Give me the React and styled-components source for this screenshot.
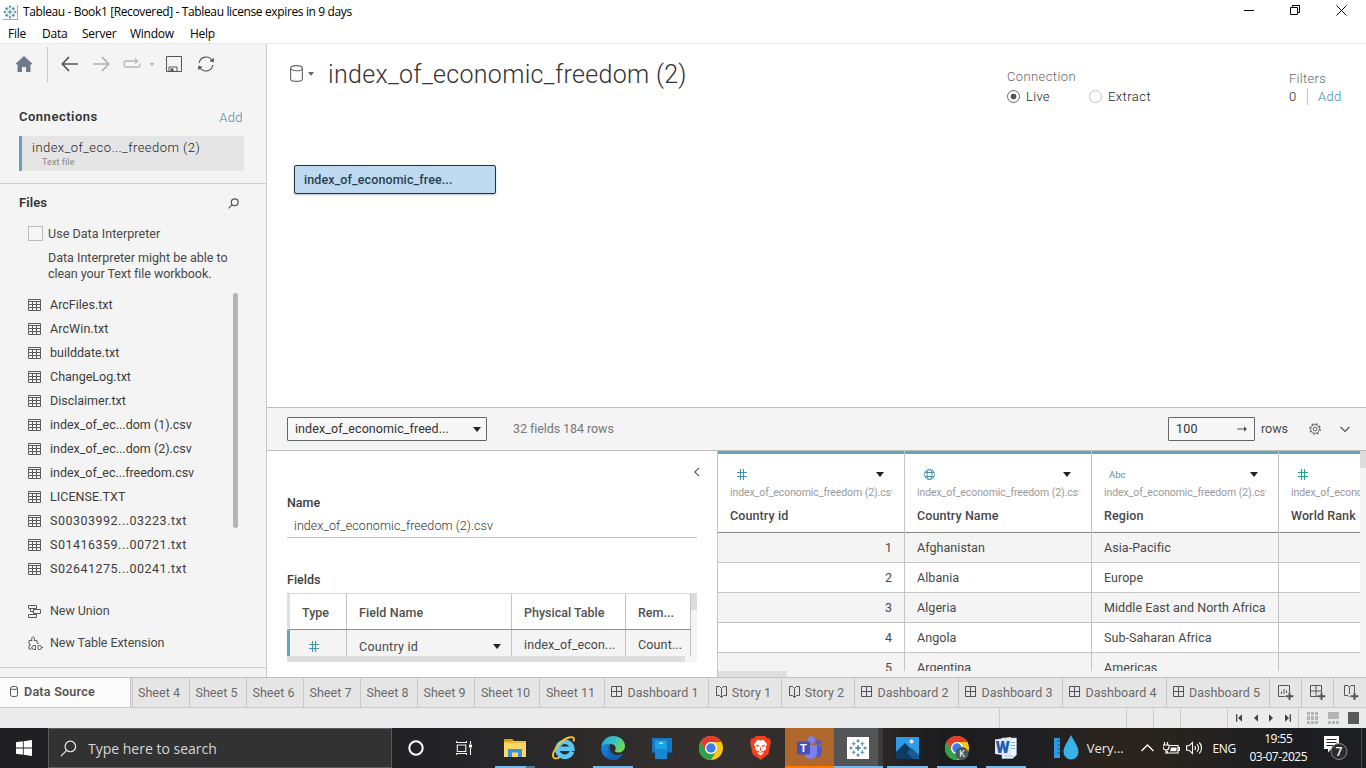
import React from "react";
import styled, { createGlobalStyle, css } from "styled-components";

const Global = createGlobalStyle`
  * { box-sizing: border-box; }
  html, body { margin: 0; padding: 0; overflow: hidden; }
  body { font-family: Roboto, "Liberation Sans", sans-serif; font-size: 13px; color: #333; background: #fff; }
  svg { display: block; flex: none; }
`;

const type = css`
  font-size: ${(p) => p.$size || 13}px;
  font-weight: ${(p) => p.$weight || 400};
  letter-spacing: ${(p) => p.$track || 0}px;
  color: ${(p) => p.$color || "#484848"};
  white-space: pre;
`;

const Window = styled.div`
  width: 1366px;
  height: 768px;
  display: flex;
  flex-direction: column;
  overflow: hidden;
  background: #fff;
`;

/* ---------- window chrome ---------- */
const TitleBar = styled.header`
  height: 24px;
  flex: none;
  display: flex;
  align-items: center;
  padding: 0 2px 0 3px;
  font-family: "Open Sans", sans-serif;
`;
const AppIcon = styled.span`
  width: 15px;
  height: 15px;
  border-right: 1px solid #aaa;
  border-bottom: 1px solid #aaa;
`;
const TitleText = styled.span`
  ${type}
  flex: 1;
  margin: -1px 0 0 5px;
`;
const WindowButton = styled.span`
  width: 46px;
  display: flex;
  justify-content: center;
  margin-top: -4px;
`;
const MenuBar = styled.nav`
  height: 20px;
  flex: none;
  display: flex;
  align-items: center;
  padding-left: 8px;
  border-bottom: 1px solid #eaeaea;
  font-family: "Open Sans", sans-serif;
`;
const MenuItem = styled.span`
  ${type}
  width: ${(p) => p.$width}px;
`;

/* ---------- body ---------- */
const Body = styled.div`
  height: 633px;
  flex: none;
  display: flex;
`;
const Sidebar = styled.aside`
  width: 267px;
  flex: none;
  background: #f4f4f4;
  border-right: 1px solid #c9c9c9;
  display: flex;
  flex-direction: column;
`;
const Toolbar = styled.div`
  height: 56px;
  flex: none;
  display: flex;
  align-items: flex-start;
  padding: 3px 0 0 14px;
`;
const ToolCell = styled.span`
  width: ${(p) => p.$width}px;
  height: 34px;
  display: flex;
  align-items: center;
  justify-content: center;
`;
const ToolDivider = styled.i`
  width: 1px;
  height: 35px;
  margin: 0 6px 0 13px;
  background: #c8c8c8;
`;
const SectionHead = styled.div`
  display: flex;
  align-items: center;
  justify-content: space-between;
  height: 34px;
  padding: 0 ${(p) => p.$right}px 0 19px;
`;
const Label = styled.span`
  ${type}
`;
const RaisedLabel = styled(Label)`
  padding-bottom: 2px;
`;
const ConnectionItem = styled.div`
  margin: 2px 22px 12px 19px;
  height: 35px;
  flex: none;
  border-left: 3px solid #66a3bd;
  background: #e5e5e5;
  padding: 4px 0 0 10px;
  display: flex;
  flex-direction: column;
`;
const ConnName = styled.span`
  ${type}
  line-height: 16px;
`;
const ConnKind = styled.span`
  ${type}
  line-height: 13px;
  margin-left: 10px;
`;
const FilesSection = styled.section`
  flex: 1;
  border-top: 1px solid #cfcfcf;
  border-bottom: 1px solid #cfcfcf;
  padding-top: 2px;
`;
const Interpreter = styled.div`
  display: flex;
  padding: 6px 0 0 28px;
  height: 73px;
`;
const CheckBox = styled.i`
  width: 15px;
  height: 15px;
  border: 1px solid #bcbcbc;
  background: #f6f6f6;
  margin: 0 5px 0 0;
`;
const InterpreterText = styled.div`
  display: flex;
  flex-direction: column;
`;
const Line = styled.span`
  ${type}
  line-height: 16px;
  margin-bottom: ${(p) => p.$gap || 0}px;
`;
const FileArea = styled.div`
  display: flex;
  justify-content: space-between;
  padding: 0 28px 0 28px;
  height: 288px;
`;
const FileList = styled.div`
  display: flex;
  flex-direction: column;
`;
const FileRow = styled.div`
  height: ${(p) => p.$height || 24}px;
  display: flex;
  align-items: center;
  gap: ${(p) => p.$gap || 9}px;
`;
const ScrollThumb = styled.i`
  width: 5px;
  height: 235px;
  border-radius: 3px;
  background: #b4b4b4;
`;
const Extras = styled.div`
  padding: 14px 0 0 28px;
`;
const SidebarFoot = styled.div`
  height: 9px;
  flex: none;
`;

/* ---------- canvas ---------- */
const Main = styled.main`
  width: 1099px;
  display: flex;
  flex-direction: column;
`;
const Canvas = styled.section`
  height: 363px;
  flex: none;
`;
const CanvasHead = styled.div`
  display: flex;
  height: 121px;
  padding-left: 23px;
`;
const SourcePicker = styled.span`
  display: flex;
  align-items: center;
  height: 59px;
  gap: 5px;
  width: 38px;
`;
const SourceTitle = styled.h1`
  ${type}
  margin: 0;
  line-height: 62px;
  width: 679px;
`;
const ConnectionMode = styled.div`
  width: 282px;
  padding-top: 25px;
`;
const Radios = styled.div`
  display: flex;
  align-items: center;
  height: 22px;
  margin-top: 1px;
`;
const Radio = styled.i`
  width: 13px;
  height: 13px;
  border-radius: 50%;
  border: 1px solid ${(p) => (p.$on ? "#666" : "#c4c4c4")};
  background: ${(p) => (p.$on ? "radial-gradient(circle, #555 0 2.6px, #fff 3.2px)" : "#fff")};
  margin-right: 6px;
`;
const RadioOption = styled.label`
  display: flex;
  align-items: center;
  width: 82px;
`;
const Filters = styled.div`
  padding-top: 27px;
`;
const FilterRow = styled.div`
  display: flex;
  align-items: center;
  height: 20px;
`;
const FilterDivider = styled.i`
  width: 1px;
  height: 17px;
  margin: 0 10px 0 10px;
  background: #c8c8c8;
`;
const TablePill = styled.div`
  margin-left: 27px;
  width: 202px;
  height: 29px;
  border: 1px solid #2a3138;
  border-radius: 2px;
  background: #bddaf1;
  box-shadow: 0 1px 2px rgba(0, 0, 0, 0.25);
  display: flex;
  align-items: center;
  padding-left: 9px;
`;

/* ---------- data pane ---------- */
const PaneBar = styled.div`
  height: 44px;
  flex: none;
  background: #f4f4f4;
  border-top: 1px solid #bdbdbd;
  border-bottom: 1px solid #bdbdbd;
  display: flex;
  align-items: center;
  padding: 0 16px 0 20px;
`;
const Select = styled.div`
  width: ${(p) => p.$width}px;
  height: 24px;
  border: 1px solid #666;
  border-radius: 1px;
  background: #f7f7f7;
  display: flex;
  align-items: center;
  justify-content: space-between;
  padding: 0 ${(p) => p.$right || 5}px 0 7px;
`;
const BarText = styled.span`
  ${type}
  margin-left: ${(p) => p.$left}px;
  padding-bottom: 2px;
`;
const Spacer = styled.span`
  flex: 1;
`;
const IconSlot = styled.span`
  margin-left: ${(p) => p.$left}px;
`;
const Caret = styled.i`
  width: 0;
  height: 0;
  flex: none;
  border: ${(p) => p.$size || 4}px solid transparent;
  border-top: ${(p) => (p.$size || 4) + 1}px solid ${(p) => p.$color || "#222"};
  border-bottom: 0;
`;
const Pane = styled.div`
  flex: 1;
  min-height: 0;
  display: flex;
`;
const Details = styled.section`
  width: 451px;
  flex: none;
  border-right: 1px solid #c4c4c4;
  padding: 0 20px;
`;
const CollapseRow = styled.div`
  height: 42px;
  display: flex;
  justify-content: flex-end;
  align-items: center;
  margin-right: -5px;
`;
const DetailLabel = styled.div`
  ${type}
  line-height: 20px;
`;
const NameField = styled.div`
  ${type}
  height: 25px;
  line-height: 25px;
  padding-left: 7px;
  border-bottom: 1px solid #c4c4c4;
  margin-bottom: 32px;
`;
const FieldsTable = styled.div`
  margin-top: 3px;
  height: 63px;
  display: flex;
`;
const FieldsGrid = styled.div`
  width: 404px;
  border-top: 1px solid #d4d4d4;
`;
const FieldsRow = styled.div`
  height: ${(p) => (p.$head ? 36 : 26)}px;
  display: grid;
  grid-template-columns: 57px 165px 114px 65px;
  border-left: 3px solid ${(p) => (p.$head ? "#dedede" : "#66a3bd")};
  border-bottom: ${(p) => (p.$head ? "1px solid #8c8c8c" : "0")};
  background: ${(p) => (p.$head ? "#fff" : "#f4f4f4")};
`;
const FieldsCell = styled.div`
  display: flex;
  align-items: center;
  justify-content: ${(p) => (p.$between ? "space-between" : "flex-start")};
  padding: ${(p) => p.$top || 0}px 10px 0 12px;
  border-right: 1px solid #c4c4c4;
  overflow: hidden;
`;
const VTrack = styled.div`
  width: 6px;
  flex: none;
  background: #f4f4f4;
`;
const VThumb = styled.div`
  height: ${(p) => p.$height}px;
  background: #dcdcdc;
`;
const HTrack = styled.div`
  height: 6px;
  flex: none;
  background: #f4f4f4;
`;
const HThumb = styled.div`
  height: 6px;
  width: ${(p) => p.$width}px;
  background: #dedede;
`;

const GridArea = styled.section`
  flex: 1;
  min-width: 0;
  display: flex;
`;
const GridMain = styled.div`
  width: 642px;
  display: flex;
  flex-direction: column;
  overflow: hidden;
`;
const GridColumns = styled.div`
  display: flex;
  height: 220px;
  flex: none;
  overflow: hidden;
`;
const GridColumn = styled.div`
  width: 187px;
  flex: none;
  border-right: 1px solid #c4c4c4;
`;
const ColumnHead = styled.div`
  height: 82px;
  border-top: 3px solid #66a3bd;
  border-bottom: 1px solid #858985;
  padding: 0 12px;
  overflow: hidden;
`;
const ColumnTop = styled.div`
  height: 31px;
  display: flex;
  align-items: center;
  justify-content: space-between;
  padding: 9px 8px 0 ${(p) => p.$left || 7}px;
`;
const ColumnSource = styled.div`
  ${type}
  line-height: 16px;
  overflow: hidden;
`;
const ColumnName = styled.div`
  ${type}
  line-height: 30px;
`;
const GridCell = styled.div`
  ${type}
  height: 30px;
  line-height: 30px;
  padding: 0 12px;
  text-align: ${(p) => (p.$right ? "right" : "left")};
  background: ${(p) => (p.$odd ? "#f4f4f4" : "#fff")};
  border-bottom: 1px solid #c4c4c4;
`;

/* ---------- sheet tabs and status ---------- */
const Tabs = styled.nav`
  height: 31px;
  flex: none;
  display: flex;
  background: #e6e6e6;
  border-top: 1px solid #c2c2c2;
  border-bottom: 1px solid #c9c9c9;
`;
const Tab = styled.span`
  ${type}
  width: ${(p) => p.$width}px;
  flex: none;
  display: flex;
  align-items: center;
  justify-content: center;
  gap: 4px;
  padding-right: 3px;
  border-right: 1px solid #c9c9c9;
`;
const AddTab = styled(Tab)`
  padding: 1px 0 0 1px;
`;
const ActiveTab = styled.span`
  ${type}
  width: 131px;
  flex: none;
  display: flex;
  align-items: center;
  gap: 6px;
  padding: 0 0 2px 10px;
  background: #fbfbfb;
  border-right: 1px solid #c2c2c2;
  margin-right: 1px;
  box-shadow: 1px 0 0 #e6e6e6, 2px 0 0 #c9c9c9;
`;
const Status = styled.div`
  height: 20px;
  flex: none;
  background: #ebebeb;
  display: flex;
  justify-content: flex-end;
`;
const StatusCell = styled.span`
  width: ${(p) => p.$width}px;
  border-left: 1px solid #cccccc;
  display: flex;
  align-items: center;
  justify-content: space-between;
  padding: 0 ${(p) => p.$pad || 0}px 0 ${(p) => (p.$pad ? p.$pad + 1 : 0)}px;
`;

/* ---------- taskbar ---------- */
const Taskbar = styled.footer`
  height: 40px;
  flex: none;
  display: flex;
  background: linear-gradient(90deg, #1f1f22 0%, #222226 30%, #2c2a29 42%, #353130 54%, #2c2825 64%, #1c1c1e 69%, #202023 76%, #2b241c 81%, #262320 87%, #1c1d21 95%, #1e1f22 100%);
`;
const StartButton = styled.span`
  width: 48px;
  flex: none;
  display: flex;
  align-items: center;
  justify-content: center;
`;
const SearchBox = styled.div`
  width: 344px;
  flex: none;
  border: 1px solid #5a5a5a;
  background: #323232;
  display: flex;
  align-items: center;
  padding-left: 11px;
  gap: 11px;
  font-family: "Open Sans", sans-serif;
`;
const TaskItem = styled.span`
  position: relative;
  width: 49.1px;
  flex: none;
  display: flex;
  align-items: center;
  justify-content: center;
  background: ${(p) => p.$bg || "transparent"};
  &::after {
    content: "";
    position: absolute;
    bottom: 0;
    left: ${(p) => p.$inset ?? 4.5}px;
    right: ${(p) => p.$inset ?? 4.5}px;
    height: 2px;
    background: ${(p) => p.$line || "transparent"};
  }
`;
const Tray = styled.div`
  flex: 1;
  min-width: 0;
  display: flex;
  align-items: center;
  padding-left: 24px;
  font-family: "Open Sans", sans-serif;
`;
const TraySlot = styled.span`
  width: ${(p) => p.$width}px;
  flex: none;
  display: flex;
  align-items: center;
  justify-content: center;
`;
const Clock = styled.span`
  ${type}
  width: 80px;
  flex: none;
  text-align: center;
  line-height: 18px;
`;
const PeekLine = styled.i`
  width: 1px;
  height: 40px;
  background: #4a4a4d;
  margin-left: 7px;
`;

/* ---------- icons ---------- */
const TableauMark = ({ size = 14, c = "#3c7d96" }) => (
  <svg width={size} height={size} viewBox="0 0 28 28" fill="none" stroke={c} strokeWidth="1.8">
    <path d="M14 9v10M9 14h10" strokeWidth="2" />
    <path d="M7.5 4v7M4 7.5h7M20.500 4v7M17 7.500h7M7.500 17v7M4 20.500h7M20.500 17v7M17 20.500h7" />
    <path d="M14 1v5M11.500 3.500h5M14 22v5M11.500 24.500h5M1 14h5M3.500 11.500v5M22 14h5M24.500 11.500v5" />
  </svg>
);
const HomeIcon = () => (
  <svg width="18" height="16" viewBox="0 0 18 16" fill="#6d7b8b">
    <path d="M9 0 18 8.300h-2.500V16H11v-5H7v5H2.500V8.300H0z" />
  </svg>
);
const ArrowIcon = ({ c, flip }) => (
  <svg width="17" height="16" viewBox="0 0 17 16" fill="none" stroke={c} strokeWidth="1.700" transform={flip ? "scale(-1,1)" : undefined}>
    <path d="M8 1 1.300 8 8 15M1.500 8H17" />
  </svg>
);
const LoopIcon = () => (
  <svg width="18" height="12" viewBox="0 0 18 12" fill="none" stroke="#b5b5b5" strokeWidth="1.300">
    <path d="M13 3H3.500A2.500 2.500 0 0 0 1 5.500v1A2.500 2.500 0 0 0 3.500 9h11A2.500 2.500 0 0 0 17 6.500V5.500M12 .5 14.500 3 12 5.500" />
  </svg>
);
const SaveIcon = () => (
  <svg width="16" height="16" viewBox="0 0 16 16" fill="none" stroke="#555" strokeWidth="1">
    <path d="M.5.5h15v15H.5zM3 15.500V11h8v4.500" />
    <path d="M4.500 12.500h3v3h-3z" fill="#555" stroke="none" />
  </svg>
);
const RefreshIcon = () => (
  <svg width="18" height="16" viewBox="0 0 18 16" fill="none" stroke="#555" strokeWidth="1.200">
    <path d="M2.200 7A6.900 6.900 0 0 1 15 4.500M15.800 9A6.900 6.900 0 0 1 3 11.500" />
    <path d="M16.800 1.800v4.400l-4.300-1zM1.200 14.200V9.800l4.300 1z" fill="#555" stroke="none" />
  </svg>
);
const SearchIcon = ({ size = 11, c = "#555", w = 1.200 }) => (
  <svg width={size} height={size} viewBox="0 0 11 11" fill="none" stroke={c} strokeWidth={w}>
    <circle cx="6.700" cy="4.200" r="3.400" />
    <path d="M4.300 6.700.6 10.400" />
  </svg>
);
const TableIcon = () => (
  <svg width="13" height="13" viewBox="0 0 13 13" fill="none" stroke="#5c5c5c">
    <path d="M.5.5h12v11H.5zM.5 2.500h12M.5 5.500h12M.5 8.500h12M4.500 2.500v9M8.500 2.500v9" />
  </svg>
);
const UnionIcon = () => (
  <svg width="13" height="13" viewBox="0 0 13 13" fill="none" stroke="#5c5c5c">
    <path d="M.5.5h8v3h-8zM5.500 4.500h7v4h-7zM.5 9.500h8v3h-8zM2.500 3.500v3H5" />
  </svg>
);
const ExtensionIcon = () => (
  <svg width="15" height="14" viewBox="0 0 15 14" fill="none" stroke="#5c5c5c" strokeWidth="1">
    <path d="M3.500 13H1V9.500c2 .6 2-2 0-1.500V4.500h3c-1-2.500.5-4 1.500-3.500s1.500 1.500.7 3.500H9V7l2 .5" />
    <path d="M7.500 9.500H6a2 2 0 0 0 0 4h1.500zM10 9.500h1.500a2 2 0 0 1 0 4H10zM3.500 11.500H4M13.500 11.500H15" />
  </svg>
);
const CylinderIcon = () => (
  <svg width="13" height="17" viewBox="0 0 13 17" fill="none" stroke="#666" strokeWidth="1.100">
    <path d="M.6 3.200v10.500c0 1.500 2.300 2.700 5.900 2.700s5.900-1.200 5.900-2.700V3.200" />
    <ellipse cx="6.500" cy="3.200" rx="5.900" ry="2.600" />
  </svg>
);
const TabCylinderIcon = () => (
  <svg width="8" height="11" viewBox="0 0 8 11" fill="none" stroke="#555">
    <rect x=".5" y=".5" width="7" height="10" rx="2" />
    <path d="M.5 2.500c1 1.300 6 1.300 7 0" />
  </svg>
);
const HashIcon = ({ c = "#4a93b0" }) => (
  <svg width="10" height="11" viewBox="0 0 10 11" fill="none" stroke={c} strokeWidth="1.150">
    <path d="M3.500 0v11M6.500 0v11M0 3.500h10M0 7.500h10" />
  </svg>
);
const GlobeIcon = () => (
  <svg width="11" height="11" viewBox="0 0 11 11" fill="none" stroke="#4a93b0" strokeWidth="1">
    <circle cx="5.500" cy="5.500" r="5" />
    <ellipse cx="5.500" cy="5.500" rx="2.400" ry="5" />
    <path d="M1 3.500h9M1 7.500h9" />
  </svg>
);
const Chevron = ({ d, w = 10, h = 10, c = "#555", s = 1.200 }) => (
  <svg width={w} height={h} viewBox="0 0 10 10" fill="none" stroke={c} strokeWidth={s}>
    <path d={d} />
  </svg>
);
const GoArrow = () => (
  <svg width="10" height="6" viewBox="0 0 10 6" fill="#555">
    <path d="M0 2.500h7V.3L10 3 7 5.700V3.500H0z" />
  </svg>
);
const GearIcon = () => (
  <svg width="12" height="12" viewBox="0 0 12 12" fill="none" stroke="#666">
    <circle cx="6" cy="6" r="5.200" strokeDasharray="2 2.080" strokeWidth="1.300" />
    <circle cx="6" cy="6" r="4.300" strokeWidth=".9" />
    <circle cx="6" cy="6" r="1.900" strokeWidth="1" />
  </svg>
);
const DashIcon = () => (
  <svg width="12" height="13" viewBox="0 0 12 13" fill="none" stroke="#555">
    <path d="M.5.5h10v10H.5zM5.500.5v10M.5 5.500h10" />
  </svg>
);
const StoryIcon = () => (
  <svg width="12" height="14" viewBox="0 0 12 14" fill="none" stroke="#555">
    <path d="M5.500 2.500 3.500.5h-3v9h3l2 2 2-2h3v-9h-3zM5.500 2.500v9" />
  </svg>
);
const AddBadge = () => <path d="M11.500 7.500V15M7.700 11.300h7.600" strokeWidth="1.900" />;
const NewSheetIcon = () => (
  <svg width="16" height="16" viewBox="0 0 16 16" fill="none" stroke="#555">
    <path d="M7 11.500H.5V.5h11V7M3.500 9V6.500M6 9V4M8.500 8V5.500" />
    <AddBadge />
  </svg>
);
const NewDashIcon = () => (
  <svg width="16" height="16" viewBox="0 0 16 16" fill="none" stroke="#555">
    <path d="M7.500 11.500h-7V.5h11V7M6 .5v11M.5 6h11" />
    <AddBadge />
  </svg>
);
const NewStoryIcon = () => (
  <svg width="16" height="16" viewBox="0 0 16 16" fill="none" stroke="#555">
    <path d="M6.500 12 5 10.500H1.500V.5H5l1.500 2 1.500-2h3.500V7M6.500 2.500V9" />
    <AddBadge />
  </svg>
);
const NavIcon = ({ flip, bar }) => (
  <svg width="7" height="8" viewBox="0 0 7 8" fill="#444" transform={flip ? "scale(-1,1)" : undefined}>
    <path d="M6 .3v7.400L2 4z" />
    {bar && <path d="M0 .3h1.300v7.400H0z" />}
  </svg>
);
const TilesIcon = () => (
  <svg width="11" height="12" viewBox="0 0 11 12" fill="#b4b4b4">
    <path d="M0 0h3v3H0zM4 0h3v3H4zM8 0h3v3H8zM0 4h3v4H0zM4 4h3v4H4zM8 4h3v4H8zM0 9h3v3H0zM4 9h3v3H4zM8 9h3v3H8z" />
  </svg>
);
const StripIcon = () => (
  <svg width="11" height="12" viewBox="0 0 11 12" fill="#b4b4b4">
    <path d="M0 0h11v7H0zM0 9h3v3H0zM4 9h3v3H4zM8 9h3v3H8z" />
  </svg>
);
const SolidIcon = () => (
  <svg width="11" height="12" viewBox="0 0 11 12" fill="#5a5a5a"><path d="M0 0h11v12H0z" /></svg>
);

const WindowsIcon = () => (
  <svg width="16" height="16" viewBox="0 0 16 16" fill="#fff">
    <path d="M0 2.200 6.900 1.300v6.300H0zM7.700 1.200 16 0v7.600H7.700zM0 8.400h6.900v6.300L0 13.800zM7.700 8.400H16V16l-8.300-1.200z" />
  </svg>
);
const CortanaIcon = () => (
  <svg width="17" height="16" viewBox="0 0 17 16" fill="none" stroke="#fff" strokeWidth="2"><circle cx="8" cy="8" r="6.700" /></svg>
);
const TaskViewIcon = () => (
  <svg width="20" height="16" viewBox="0 0 20 16" fill="none" stroke="#f2f2f2" strokeWidth="1.100">
    <path d="M1.300 5h8.500v6.500H1.300zM.5 1v1.500h10V1M.5 15v-1.500h10V15M14.500 1v3M14.500 8v7" />
    <path d="M13 4.500h3v3h-3z" fill="#fff" stroke="none" />
  </svg>
);
const FolderIcon = () => (
  <svg width="22" height="20" viewBox="0 0 22 20">
    <path d="M0 1h8l2 2h12v16H0z" fill="#f3bd3b" />
    <path d="M0 1h8l1.500 2.500H0z" fill="#d99a1c" />
    <path d="M0 5h22v14H0z" fill="#ffd768" />
    <path d="M4 19v-8h14v8h-4v-4.500H8V19z" fill="#3a93d6" />
  </svg>
);
const IEIcon = () => (
  <svg width="24" height="24" viewBox="0 0 24 24" fill="none">
    <path d="M20 15.500A7.500 7.500 0 1 1 20.300 12.800H7" stroke="#58c8f3" strokeWidth="4.500" />
    <path d="M2 22C-2 18 8 4 17 1.500c5-1.400 5.500 1 4.500 4" stroke="#f2c230" strokeWidth="1.900" />
    <path d="M2 22c1.500 1 4 .2 6-1" stroke="#f2c230" strokeWidth="1.900" />
  </svg>
);
const EdgeIcon = () => (
  <svg width="24" height="24" viewBox="0 0 24 24">
    <defs>
      <linearGradient id="edgeTop" x1="0" y1="0" x2="1" y2=".5"><stop stopColor="#2aa3e0" /><stop offset=".55" stopColor="#35c2c4" /><stop offset="1" stopColor="#6fdc55" /></linearGradient>
      <linearGradient id="edgeLow" x1="0" y1="0" x2="1" y2="1"><stop stopColor="#1b8de0" /><stop offset="1" stopColor="#0c4f9e" /></linearGradient>
    </defs>
    <path d="M.3 11C1 4.500 6 0 12.300 0 19 0 24 4.500 24 10c0 4-3 6.500-6.500 6.500-3 0-4-1.200-3.500-2 2-3 0-6.500-4.500-6.500C5 8 1.500 9.500.3 11z" fill="url(#edgeTop)" />
    <path d="M.2 12C1.500 8.500 6 7 9.500 8 7 10 7 16 12 18.500c3.500 1.700 7 1 9.800-.8C19.500 22 16 24 12 24 5 24-.3 18.500.2 12z" fill="url(#edgeLow)" />
    <path d="M8.500 9.500C5.500 14 8 22 14.500 23.700 18 22.800 20.500 20.500 21.800 17.700 18.500 19.500 14.500 19.500 12 17.500 9 15 9 12 8.500 9.500z" fill="#1362b0" />
  </svg>
);
const PhoneIcon = () => (
  <svg width="22" height="22" viewBox="0 0 22 22">
    <path d="M1 1h20v15H1z" fill="#1976c0" />
    <path d="M0 15h22v1.500H0z" fill="#0c4f91" />
    <path d="M4 3.500h12V22H4z" fill="#1ba3e8" />
    <path d="M4 12h12v10H4z" fill="#1689d2" />
    <path d="M8 5.500h4v1.300H8z" fill="#d8f2ff" />
  </svg>
);
const ChromeIcon = ({ badge }) => (
  <svg width="24" height="24" viewBox="0 0 24 24">
    <circle cx="12" cy="12" r="12" fill="#fbc515" />
    <path d="M1.600 6A12 12 0 0 0 12 24l5.200-9A6 6 0 0 1 6.800 15z" fill="#2da14c" />
    <path d="M1.600 6A12 12 0 0 1 22.400 6H12a6 6 0 0 0-5.200 9z" fill="#e33b2e" />
    <circle cx="12" cy="12" r="6" fill="#fff" />
    <circle cx="12" cy="12" r="4.700" fill="#3b7ded" />
    {badge && (
      <g>
        <circle cx="17" cy="17.500" r="6.500" fill="#455a64" />
        <text x="17" y="20.800" textAnchor="middle" fontSize="9" fontFamily="Roboto" fill="#fff">K</text>
      </g>
    )}
  </svg>
);
const BraveIcon = () => (
  <svg width="21" height="24" viewBox="0 0 21 24">
    <path d="M6 0h9l2.500 2.500 2-.3L21 6l-.7 2.500L18.500 18 10.500 24 2.500 18 .7 8.500 0 6l1.500-3.800 2 .3z" fill="#f5401f" />
    <path d="m10.500 4.500 3-.7 3.500 4.500-1.500 3 .5 2-3 2.200.5 1.700-3 2.300-3-2.300.5-1.700L5 13.300l.5-2-1.500-3 3.500-4.500z" fill="#fff" />
    <path d="m6 8.500 3 1-.5 1.500-2-.7zM15 8.500l-3 1 .5 1.500 2-.7zM10.500 10l.7 4-.7 1-.7-1zM7.500 14l2.500 2h1l2.500-2-1 2.500h-4z" fill="#f5401f" />
  </svg>
);
const TeamsIcon = () => (
  <svg width="25" height="24" viewBox="0 0 25 24">
    <circle cx="21.500" cy="6.500" r="2.600" fill="#5059c9" />
    <circle cx="14.500" cy="4" r="3.700" fill="#7b83eb" />
    <path d="M18 10h7v7a4 4 0 0 1-6 3.300z" fill="#5059c9" />
    <path d="M8 9h12v8a6.500 6.500 0 0 1-12 3z" fill="#7b83eb" />
    <rect y="5.500" width="13" height="13" rx="1.200" fill="#4650b8" />
    <text x="6.500" y="16" textAnchor="middle" fontSize="11" fontWeight="700" fontFamily="Roboto" fill="#fff">T</text>
  </svg>
);
const TableauTile = () => (
  <svg width="22" height="22" viewBox="0 0 28 28" fill="none">
    <path d="M0 0h28v28H0z" fill="#fff" />
    <g strokeWidth="1.300">
      <path d="M14 10.500v7M10.500 14h7" stroke="#3a7fa0" strokeWidth="2" />
      <path d="M8.500 6v5M6 8.500h5M19.500 6v5M17 8.500h5M8.500 17v5M6 19.500h5M19.500 17v5M17 19.500h5" stroke="#4f93b0" />
      <path d="M14 3v4M12 5h4M14 21v4M12 23h4M3 14h4M5 12v4M21 14h4M23 12v4" stroke="#3f718c" />
    </g>
  </svg>
);
const PhotosIcon = () => (
  <svg width="23" height="22" viewBox="0 0 23 22">
    <path d="M0 0h23v22H0z" fill="#2e9be8" />
    <path d="M0 15 9 6l14 14v2H0z" fill="#0f3b63" />
    <path d="M11 15.500 15.500 11l7.500 7v4h-6z" fill="#1b5a92" />
    <circle cx="15.500" cy="4.500" r="2" fill="#e6f5ff" />
  </svg>
);
const WordIcon = () => (
  <svg width="22" height="22" viewBox="0 0 22 22">
    <path d="M7 1h14.500v17l-4 3.500H7z" fill="#f4f8fc" stroke="#9fb9d6" strokeWidth=".6" />
    <path d="M15 5.500h5M15.500 8.500H20M15.500 11.500H20M9 19h9" stroke="#86a9d1" strokeWidth="1" />
    <path d="M0 2.500 16 0v19L0 17z" fill="#dce9f6" />
    <text x="7.800" y="15.500" textAnchor="middle" fontSize="16" fontWeight="900" fontFamily="Roboto" fill="#1f5aa6">W</text>
  </svg>
);
const WeatherIcon = () => (
  <svg width="25" height="26" viewBox="0 0 25 26">
    <path d="M0 3h6v20H0z" fill="#2c9be6" />
    <path d="M3.500 6H6M3.500 10H6M3.500 14H6M3.500 18H6" stroke="#174a75" />
    <path d="M17 0c3 6.500 7.500 11 7.500 17a7.500 7.500 0 0 1-15 0C9.500 11 14 6.500 17 0z" fill="#38b3ea" />
  </svg>
);
const BatteryIcon = () => (
  <svg width="17" height="13" viewBox="0 0 17 13" fill="none" stroke="#fff" strokeWidth="1.200">
    <path d="M7 3.500h8v7.500H4.500V9M15 5.500h1.500v3H15" />
    <path d="M8 5.500h5.500v3.800H7z" fill="#fff" stroke="none" />
    <path d="M1.500 0v3M4.500 0v3M0 3h6v2a3 3 0 0 1-6 0zM3 8v4" />
  </svg>
);
const SoundIcon = () => (
  <svg width="17" height="14" viewBox="0 0 17 14" fill="none" stroke="#fff" strokeWidth="1.100">
    <path d="M.6 4.800H3L6.500 1.500v11L3 9.200H.6zM8.700 5a3 3 0 0 1 0 4M11 3.200a5.500 5.500 0 0 1 0 7.600M13.300 1.500a8 8 0 0 1 0 11" />
  </svg>
);
const NoticeIcon = () => (
  <svg width="26" height="26" viewBox="0 0 26 26">
    <path d="M1 1h15v13H8l-3 3.500V14H1z" fill="#fff" />
    <path d="M3.500 4.500h10M3.500 7.500h10M3.500 10.500h7" stroke="#222" strokeWidth="1.100" />
    <circle cx="16" cy="16.500" r="8" fill="#2b2c2f" stroke="#8b8b8b" />
    <text x="16" y="20.800" textAnchor="middle" fontSize="12" fontWeight="600" fontFamily="Open Sans" fill="#fff">7</text>
  </svg>
);

/* ---------- data ---------- */
const files = [
  ["ArcFiles.txt", 0], ["ArcWin.txt", 0.1], ["builddate.txt", 0], ["ChangeLog.txt", 0], ["Disclaimer.txt", 0],
  ["index_of_ec...dom (1).csv", 0], ["index_of_ec...dom (2).csv", 0], ["index_of_ec...freedom.csv", -0.03],
  ["LICENSE.TXT", 0.05], ["S00303992...03223.txt", 0.5], ["S01416359...00721.txt", 0.5], ["S02641275...00241.txt", 0.5],
];
const columns = [
  { name: "Country id", icon: <HashIcon />, right: true, rows: ["1", "2", "3", "4", "5"] },
  { name: "Country Name", icon: <GlobeIcon />, rows: ["Afghanistan", "Albania", "Algeria", "Angola", "Argentina"] },
  { name: "Region", left: 5, icon: <Label $size={9.5} $color="#4a93b0">Abc</Label>, rows: ["Asia-Pacific", "Europe", "Middle East and North Africa", "Sub-Saharan Africa", "Americas"] },
  { name: "World Rank", icon: <HashIcon c="#22a384" />, rows: [" ", " ", " ", " ", " "] },
];
const sheets = [
  ["Sheet 4", 58], ["Sheet 5", 57], ["Sheet 6", 57], ["Sheet 7", 57], ["Sheet 8", 57], ["Sheet 9", 57], ["Sheet 10", 65], ["Sheet 11", 65],
  ["Dashboard 1", 104, "d"], ["Story 1", 73, "s"], ["Story 2", 73, "s"], ["Dashboard 2", 104, "d"], ["Dashboard 3", 104, "d"],
  ["Dashboard 4", 104, "d"], ["Dashboard 5", 103, "d"],
];
const menus = [["File", 34], ["Data", 40], ["Server", 48], ["Window", 60], ["Help", 40]];
const LINE = "#76b9ed";

export default function App() {
  return (
    <Window>
      <Global />
      <TitleBar>
        <AppIcon><TableauMark /></AppIcon>
        <TitleText $size={12} $color="#000" $track={-0.365}>Tableau - Book1 [Recovered] - Tableau license expires in 9 days</TitleText>
        <WindowButton>
          <svg width="10" height="10" viewBox="0 0 10 10" stroke="#000"><path d="M0 5.500h10" /></svg>
        </WindowButton>
        <WindowButton>
          <svg width="10" height="10" viewBox="0 0 10 10" stroke="#000" fill="none"><path d="M.5 2.500h7v7h-7zM2.500 2V.5h7v7H8" /></svg>
        </WindowButton>
        <WindowButton>
          <svg width="11" height="11" viewBox="0 0 11 11" stroke="#000" fill="none"><path d="m.5.500 10 10M10.500.500l-10 10" /></svg>
        </WindowButton>
      </TitleBar>
      <MenuBar>
        {menus.map(([m, w]) => <MenuItem key={m} $width={w} $size={12} $color="#000" $track={-0.25}>{m}</MenuItem>)}
      </MenuBar>

      <Body>
        <Sidebar>
          <Toolbar>
            <ToolCell $width={20}><HomeIcon /></ToolCell>
            <ToolDivider />
            <ToolCell $width={30}><ArrowIcon c="#555" /></ToolCell>
            <ToolCell $width={34}><ArrowIcon c="#b0b0b0" flip /></ToolCell>
            <ToolCell $width={27}><LoopIcon /></ToolCell>
            <ToolCell $width={14}><Caret $size={2.5} $color="#aaa" /></ToolCell>
            <ToolCell $width={29}><SaveIcon /></ToolCell>
            <ToolCell $width={35}><RefreshIcon /></ToolCell>
          </Toolbar>
          <SectionHead $right={23}>
            <RaisedLabel $size={13} $weight={600} $color="#333" $track={0.5}>Connections</RaisedLabel>
            <Label $size={13} $weight={300} $color="#3f8cab" $track={0.4}>Add</Label>
          </SectionHead>
          <ConnectionItem>
            <ConnName $size={13} $weight={300} $track={0.46} $color="#222">index_of_eco..._freedom (2)</ConnName>
            <ConnKind $size={9} $track={0.1} $color="#888">Text file</ConnKind>
          </ConnectionItem>
          <FilesSection>
            <SectionHead $right={27}>
              <RaisedLabel $size={13} $weight={600} $color="#333" $track={0.1}>Files</RaisedLabel>
              <SearchIcon />
            </SectionHead>
            <Interpreter>
              <CheckBox />
              <InterpreterText>
                <Line $gap={8} $size={12.5} $track={0.05}>Use Data Interpreter</Line>
                <Line $size={12.5}>Data Interpreter might be able to</Line>
                <Line $size={12.5} $track={-0.05}>clean your Text file workbook.</Line>
              </InterpreterText>
            </Interpreter>
            <FileArea>
              <FileList>
                {files.map(([f, t]) => (
                  <FileRow key={f}><TableIcon /><RaisedLabel $size={12.5} $track={t} $color="#3c3c3c">{f}</RaisedLabel></FileRow>
                ))}
              </FileList>
              <ScrollThumb />
            </FileArea>
            <Extras>
              <FileRow $height={32}><UnionIcon /><RaisedLabel $size={12.5} $track={-0.07}>New Union</RaisedLabel></FileRow>
              <FileRow $height={32} $gap={7}><ExtensionIcon /><RaisedLabel $size={12.5} $track={-0.07}>New Table Extension</RaisedLabel></FileRow>
            </Extras>
          </FilesSection>
          <SidebarFoot />
        </Sidebar>

        <Main>
          <Canvas>
            <CanvasHead>
              <SourcePicker><CylinderIcon /><Caret $size={3} $color="#666" /></SourcePicker>
              <SourceTitle $size={25} $weight={300} $color="#333" $track={0.31}>index_of_economic_freedom (2)</SourceTitle>
              <ConnectionMode>
                <Label $size={13} $weight={300} $color="#666" $track={0.4}>Connection</Label>
                <Radios>
                  <RadioOption><Radio $on /><Label $size={13} $weight={300} $color="#222" $track={0.3}>Live</Label></RadioOption>
                  <RadioOption><Radio /><Label $size={13} $weight={300} $color="#222" $track={0.45}>Extract</Label></RadioOption>
                </Radios>
              </ConnectionMode>
              <Filters>
                <Label $size={13} $weight={300} $color="#666" $track={0.3}>Filters</Label>
                <FilterRow>
                  <Label $size={13} $weight={300} $color="#222" $track={0.7}>0</Label>
                  <FilterDivider />
                  <Label $size={13} $weight={300} $color="#3f8cab" $track={0.4}>Add</Label>
                </FilterRow>
              </Filters>
            </CanvasHead>
            <TablePill><Label $size={12.5} $weight={500} $color="#2b3f50" $track={0.1}>index_of_economic_free...</Label></TablePill>
          </Canvas>

          <PaneBar>
            <Select $width={200}><RaisedLabel $size={12.5} $color="#333" $track={0.08}>index_of_economic_freed...</RaisedLabel><Caret /></Select>
            <BarText $left={26} $size={12.5} $color="#777" $track={-0.07}>32 fields 184 rows</BarText>
            <Spacer />
            <Select $width={87} $right={7}><RaisedLabel $size={12.5} $color="#333" $track={0.3}>100</RaisedLabel><GoArrow /></Select>
            <BarText $left={6} $size={12.5}>rows</BarText>
            <IconSlot $left={21}><GearIcon /></IconSlot>
            <IconSlot $left={19}><Chevron d="M.5 3 5 7.500 9.500 3" /></IconSlot>
          </PaneBar>

          <Pane>
            <Details>
              <CollapseRow><Chevron d="M7 .8 2.800 5 7 9.200" s={1.1} /></CollapseRow>
              <DetailLabel $size={12.5} $weight={500} $color="#3c3c3c">Name</DetailLabel>
              <NameField $size={12.5} $weight={300} $color="#333" $track={0.07}>index_of_economic_freedom (2).csv</NameField>
              <DetailLabel $size={12.5} $weight={500} $color="#3c3c3c" $track={0}>Fields</DetailLabel>
              <FieldsTable>
                <FieldsGrid>
                  <FieldsRow $head>
                    <FieldsCell $top={2}><Label $size={12.5} $weight={500} $color="#505050">Type</Label></FieldsCell>
                    <FieldsCell $top={2}><Label $size={12.5} $weight={500} $color="#505050" $track={0.1}>Field Name</Label></FieldsCell>
                    <FieldsCell $top={2}><Label $size={12.5} $weight={500} $color="#505050">Physical Table</Label></FieldsCell>
                    <FieldsCell $top={2}><Label $size={12.5} $weight={500} $color="#505050">Rem...</Label></FieldsCell>
                  </FieldsRow>
                  <FieldsRow>
                    <FieldsCell $top={7}><IconSlot $left={7}><HashIcon /></IconSlot></FieldsCell>
                    <FieldsCell $between $top={7}><Label $size={12.5} $track={0.25}>Country id</Label><Caret /></FieldsCell>
                    <FieldsCell $top={3}><Label $size={12.5} $track={0.1}>index_of_econ...</Label></FieldsCell>
                    <FieldsCell $top={3}><Label $size={12.5} $track={0.15}>Count...</Label></FieldsCell>
                  </FieldsRow>
                </FieldsGrid>
                <VTrack><VThumb $height={17} /></VTrack>
              </FieldsTable>
              <HTrack><HThumb $width={398} /></HTrack>
            </Details>

            <GridArea>
              <GridMain>
                <GridColumns>
                  {columns.map((c) => (
                    <GridColumn key={c.name}>
                      <ColumnHead>
                        <ColumnTop $left={c.left}>{c.icon}<Caret /></ColumnTop>
                        <ColumnSource $size={10.5} $color="#9a9a9a" $track={-0.09}>index_of_economic_freedom (2).csv</ColumnSource>
                        <ColumnName $size={12.5} $weight={500} $color="#484848" $track={0.1}>{c.name}</ColumnName>
                      </ColumnHead>
                      {c.rows.map((r, i) => (
                        <GridCell key={i} $size={12.5} $track={0.06} $odd={i % 2 === 0} $right={c.right}>{r}</GridCell>
                      ))}
                    </GridColumn>
                  ))}
                </GridColumns>
                <HTrack><HThumb $width={69} /></HTrack>
              </GridMain>
              <VTrack><VThumb $height={17} /></VTrack>
            </GridArea>
          </Pane>
        </Main>
      </Body>

      <Tabs>
        <ActiveTab $size={12.5} $weight={600} $color="#555" $track={0.25}><TabCylinderIcon />Data Source</ActiveTab>
        {sheets.map(([s, w, k]) => (
          <Tab key={s} $width={w} $size={12.5} $color="#6a6a6a" $track={0.05}>
            {k === "d" && <DashIcon />}
            {k === "s" && <StoryIcon />}
            {s}
          </Tab>
        ))}
        <AddTab $width={32}><NewSheetIcon /></AddTab>
        <AddTab $width={32}><NewDashIcon /></AddTab>
        <AddTab $width={33}><NewStoryIcon /></AddTab>
      </Tabs>
      <Status>
        <StatusCell $width={127} />
        <StatusCell $width={27} />
        <StatusCell $width={27} />
        <StatusCell $width={47} />
        <StatusCell $width={71} $pad={7}><NavIcon bar /><NavIcon /><NavIcon flip /><NavIcon flip bar /></StatusCell>
        <StatusCell $width={68} $pad={7}><TilesIcon /><StripIcon /><SolidIcon /></StatusCell>
      </Status>

      <Taskbar>
        <StartButton><WindowsIcon /></StartButton>
        <SearchBox>
          <SearchIcon size={17} c="#e8e8e8" w={0.8} />
          <Label $size={14} $color="#d6d6d6">Type here to search</Label>
        </SearchBox>
        <TaskItem><CortanaIcon /></TaskItem>
        <TaskItem><TaskViewIcon /></TaskItem>
        <TaskItem $line="linear-gradient(90deg, #76b9ed 31px, #4d7796 31px)"><FolderIcon /></TaskItem>
        <TaskItem><IEIcon /></TaskItem>
        <TaskItem $line={LINE}><EdgeIcon /></TaskItem>
        <TaskItem><PhoneIcon /></TaskItem>
        <TaskItem><ChromeIcon /></TaskItem>
        <TaskItem><BraveIcon /></TaskItem>
        <TaskItem $bg="#b0672c" $line="#ff7a00" $inset={0}><TeamsIcon /></TaskItem>
        <TaskItem $bg="linear-gradient(90deg, #545557 44px, #3c3c3e 44px)" $line={LINE} $inset={0}><TableauTile /></TaskItem>
        <TaskItem $line={LINE}><PhotosIcon /></TaskItem>
        <TaskItem $line={LINE}><ChromeIcon badge /></TaskItem>
        <TaskItem $line={LINE}><WordIcon /></TaskItem>
        <Tray>
          <TraySlot $width={25}><WeatherIcon /></TraySlot>
          <TraySlot $width={52}><Label $size={13} $color="#e8e8e8">Very...</Label></TraySlot>
          <TraySlot $width={32}><Chevron d="M0 7.500 5 2.500 10 7.500" w={13} h={12} c="#fff" s={1.100} /></TraySlot>
          <TraySlot $width={16}><BatteryIcon /></TraySlot>
          <TraySlot $width={31}><SoundIcon /></TraySlot>
          <TraySlot $width={28}><Label $size={12} $color="#fff" $track={-0.4}>ENG</Label></TraySlot>
          <Clock $size={12} $color="#fff" $track={-0.5}>{"19:55\n03-07-2025"}</Clock>
          <TraySlot $width={36}><NoticeIcon /></TraySlot>
          <PeekLine />
        </Tray>
      </Taskbar>
    </Window>
  );
}
